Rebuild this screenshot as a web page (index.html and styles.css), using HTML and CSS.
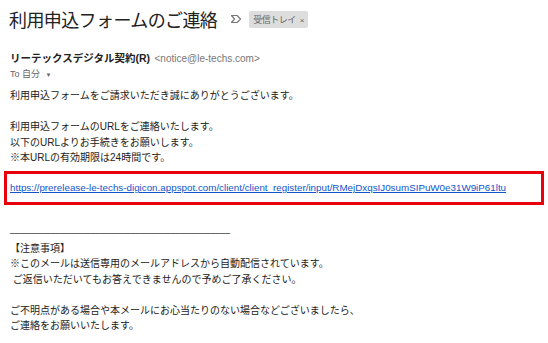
FILE: index.html
```html
<!DOCTYPE html>
<html lang="ja">
<head>
    <meta charset="UTF-8">
    <meta name="viewport" content="width=device-width, initial-scale=1.0">
    <title>利用申込フォームのご連絡</title>
    <link rel="stylesheet" href="styles.css">
</head>
<body>

    <!-- Subject -->
    <header class="subject">
        <h1 class="subject-title">利用申込フォームのご連絡</h1>
        <svg class="label-icon" width="12" height="10" viewBox="0 0 12 10">
            <path d="M1.5 1.5 H7 L10.5 5 L7 8.5 H1.5 L4.5 5 Z" fill="none" stroke="#777" stroke-width="1.2" stroke-linejoin="round"/>
        </svg>
        <span class="badge">受信トレイ <span class="badge-x">×</span></span>
    </header>

    <!-- Sender -->
    <div class="sender">
        <span class="sender-name">リーテックスデジタル契約(R)</span>
        <span class="sender-mail">&lt;notice@le-techs.com&gt;</span>
    </div>
    <div class="recipient">To 自分 <span class="caret">▼</span></div>

    <!-- Message body -->
    <main class="mail-body">
        <p>利用申込フォームをご請求いただき誠にありがとうございます。</p>
        <p>利用申込フォームのURLをご連絡いたします。<br>
        以下のURLよりお手続きをお願いします。<br>
        ※本URLの有効期限は24時間です。</p>

        <div class="link-box">
            <a href="#">https://prerelease-le-techs-digicon.appspot.com/client/client_register/input/RMejDxqsIJ0sumSIPuW0e31W9iP61ltu</a>
        </div>

        <p class="rule">――――――――――――――――――――――</p>
        <p>【注意事項】<br>
        ※このメールは送信専用のメールアドレスから自動配信されています。<br>
        &nbsp;ご返信いただいてもお答えできませんので予めご了承ください。</p>
        <p>ご不明点がある場合や本メールにお心当たりのない場合などございましたら、<br>
        ご連絡をお願いいたします。</p>
    </main>

</body>
</html>
```
FILE: styles.css
```css
/* General */
body {
    margin: 0;
    background-color: #fff;
    color: #222;
    font-family: "Liberation Sans", "Noto Sans CJK JP", sans-serif;
}

/* Subject line */
.subject {
    display: flex;
    align-items: center;
    height: 38px;
    padding-left: 9px;
}

.subject-title {
    margin: 0;
    font-size: 18px;
    font-weight: normal;
    color: #222;
    letter-spacing: -0.6px;
}

.label-icon {
    margin-left: 13px;
}

.badge {
    margin-left: 7px;
    padding: 2px 4px;
    background-color: #ddd;
    border-radius: 2px;
    font-size: 9px;
    letter-spacing: -0.5px;
    color: #666;
}

.badge-x {
    font-size: 8px;
    margin-left: 2px;
}

/* Sender */
.sender {
    margin-top: 12px;
    padding-left: 10px;
    line-height: 14px;
}

.sender-name {
    font-size: 10.5px;
    font-weight: bold;
    color: #222;
}

.sender-mail {
    font-size: 10px;
    color: #777;
}

.recipient {
    margin-top: 1px;
    padding-left: 10px;
    font-size: 9px;
    line-height: 14px;
    color: #666;
}

.caret {
    font-size: 6px;
    margin-left: 3px;
}

/* Body */
.mail-body {
    margin-top: 6px;
    font-size: 10px;
    line-height: 15.5px;
}

.mail-body p {
    margin: 0 0 15.5px 10px;
}

.link-box {
    margin: -10px 4px 0;
    border: 3px solid #e8000b;
    padding: 6px 3px 6px;
    line-height: 16px;
    white-space: nowrap;
    overflow: hidden;
}

.link-box a {
    font-family: "Liberation Sans", Arial, sans-serif;
    font-size: 9.8px;
    color: #15c;
}

.mail-body .rule {
    margin-top: 20px;
    margin-bottom: 0;
    color: #444;
}
```
